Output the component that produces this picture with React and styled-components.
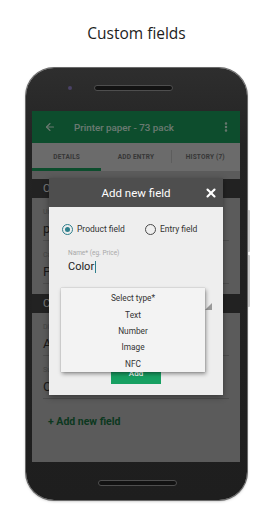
import React from 'react';
import styled, { createGlobalStyle } from 'styled-components';
import { ArrowLeft, EllipsisVertical, X } from 'lucide-react';

const GlobalStyle = createGlobalStyle`
  html, body {
    margin: 0;
    padding: 0;
    background: #ffffff;
  }
  * {
    box-sizing: border-box;
  }
`;

const Page = styled.div`
  width: 273px;
  height: 512px;
  overflow: hidden;
  font-family: Roboto, "Liberation Sans", sans-serif;
`;

const Heading = styled.h1`
  margin: 0;
  padding-top: 22px;
  font-family: "Open Sans", "Liberation Sans", sans-serif;
  font-weight: 400;
  font-size: 15.5px;
  line-height: 22px;
  color: #1c1c1c;
  text-align: center;
`;

const Phone = styled.div`
  position: relative;
  margin: 24px 0 0 26px;
  width: 221px;
  height: 432px;
  border-radius: 28px;
  background: linear-gradient(180deg, #2e2e2e 0%, #232323 18%, #1e1e1e 100%);
  box-shadow: 0 0 0 1px #6a6a6a, 0 1px 3px rgba(0, 0, 0, 0.35);
  display: flex;
  flex-direction: column;
`;

const SideKey = styled.div`
  position: absolute;
  right: -3px;
  top: ${(p) => p.$top}px;
  width: 2px;
  height: ${(p) => p.$h}px;
  background: #c9c9c9;
  border-radius: 0 1px 1px 0;
`;

const TopBezel = styled.div`
  height: 43px;
  display: flex;
  align-items: flex-start;
  padding: 17px 0 0 42px;
  gap: 22px;
`;

const Camera = styled.div`
  width: 4px;
  height: 4px;
  margin-top: 1px;
  border-radius: 50%;
  background: #4a4266;
`;

const Speaker = styled.div`
  width: 79px;
  height: 6px;
  border-radius: 3px;
  background: #121212;
  border: 1px solid #4e4e4e;
`;

const Screen = styled.div`
  position: relative;
  margin: 0 7px 0 6px;
  height: 351px;
  overflow: hidden;
  background: #b6b6b6;
`;

const AppBar = styled.div`
  height: 32px;
  background: #1a9a5a;
  display: flex;
  align-items: center;
  padding: 0 8px 0 12px;
  color: #d6f2e2;
`;

const AppTitle = styled.div`
  flex: 1;
  margin-left: 18px;
  font-size: 9.8px;
  font-weight: 500;
`;

const Tabs = styled.div`
  height: 28px;
  background: #d6d6d6;
  display: flex;
`;

const Tab = styled.div`
  position: relative;
  flex: 1;
  display: flex;
  align-items: center;
  justify-content: center;
  font-size: 6.5px;
  font-weight: 700;
  letter-spacing: 0.2px;
  color: #6e6e6e;
  border-bottom: 3px solid ${(p) => (p.$active ? '#1a9a5a' : 'transparent')};
  padding-top: 3px;

  & + &::before {
    content: '';
    position: absolute;
    left: 0;
    top: 7px;
    height: 13px;
    width: 1px;
    background: #bbbbbb;
  }
`;

const Content = styled.div`
  padding-top: 8px;
  display: flex;
  flex-direction: column;
`;

const SectionHeader = styled.div`
  height: 19px;
  margin-top: ${(p) => p.$gap || 0}px;
  background: #444;
  color: #eeeeee;
  font-size: 11px;
  line-height: 19px;
  padding-left: 11px;
`;

const Field = styled.div`
  height: 43px;
  margin: 0 11px;
  padding-top: 10px;
  border-bottom: 1px solid #9a9a9a;
`;

const FieldLabel = styled.div`
  font-size: 7px;
  line-height: 9px;
  color: #888;
`;

const FieldValue = styled.div`
  margin-top: 3px;
  font-size: 13px;
  line-height: 17px;
  color: #333;
`;

const AddLink = styled.div`
  margin: 16px 0 0 16px;
  font-size: 10.5px;
  font-weight: 700;
  line-height: 14px;
  color: #16703f;
`;

const Scrim = styled.div`
  position: absolute;
  inset: 0;
  background: rgba(0, 0, 0, 0.5);
`;

const Dialog = styled.div`
  position: absolute;
  left: 17px;
  top: 67px;
  width: 174px;
  box-shadow: 0 2px 6px rgba(0, 0, 0, 0.4);
`;

const DialogHeader = styled.div`
  height: 29px;
  background: #4e4e4e;
  display: grid;
  grid-template-columns: 1fr auto 1fr;
  align-items: center;
  color: #ffffff;
`;

const DialogTitle = styled.div`
  grid-column: 2;
  font-size: 11.5px;
  line-height: 16px;
`;

const Close = styled.div`
  justify-self: end;
  margin-right: 5px;
  display: flex;
`;

const DialogBody = styled.div`
  position: relative;
  background: #eeeeee;
  padding: 17px 0 11px;
  display: flex;
  flex-direction: column;
`;

const RadioRow = styled.div`
  display: flex;
  gap: 20px;
  padding-left: 13px;
`;

const RadioOption = styled.label`
  display: flex;
  align-items: center;
  gap: 4px;
  font-size: 8.5px;
  line-height: 11px;
  color: #333;
`;

const RadioDot = styled.span`
  width: 11px;
  height: 11px;
  border-radius: 50%;
  border: 1.3px solid ${(p) => (p.$checked ? '#2e7f8c' : '#4a4a4a')};
  display: flex;
  align-items: center;
  justify-content: center;

  &::after {
    content: '';
    width: 5px;
    height: 5px;
    border-radius: 50%;
    background: ${(p) => (p.$checked ? '#2e7f8c' : 'transparent')};
  }
`;

const NameField = styled.div`
  margin-top: 14px;
  padding-left: 19px;
`;

const NameLabel = styled.div`
  font-size: 6.5px;
  line-height: 9px;
  color: #a8a8a8;
`;

const NameValue = styled.div`
  margin-top: 2px;
  font-size: 11px;
  line-height: 14px;
  color: #222;
  display: flex;
  align-items: center;
`;

const Caret = styled.span`
  width: 1px;
  height: 12px;
  margin-left: 1px;
  background: #2e7f8c;
`;

const SpinnerRow = styled.div`
  height: 22px;
  margin-top: 14px;
  padding-right: 11px;
  display: flex;
  justify-content: flex-end;
  align-items: flex-end;
`;

const SpinnerArrow = styled.span`
  width: 0;
  height: 0;
  border-left: 7px solid transparent;
  border-bottom: 7px solid #9a9a9a;
`;

const AddButton = styled.div`
  align-self: center;
  margin-top: 52px;
  width: 50px;
  height: 22px;
  background: #17a062;
  color: #ffffff;
  font-size: 8px;
  font-weight: 500;
  display: flex;
  align-items: center;
  justify-content: center;
`;

const TypeMenu = styled.div`
  position: absolute;
  left: 12px;
  top: 81px;
  width: 144px;
  padding-top: 2px;
  background: #f3f3f3;
  box-shadow: 1px 2px 4px rgba(0, 0, 0, 0.4), 0 0 1px rgba(0, 0, 0, 0.3);
`;

const TypeItem = styled.div`
  height: 16.4px;
  display: flex;
  align-items: center;
  justify-content: center;
  font-size: 8.3px;
  color: #333;
`;

const BottomBezel = styled.div`
  height: 38px;
  display: flex;
  justify-content: center;
  padding: 18px 0 0 1px;
`;

const tabs = ['DETAILS', 'ADD ENTRY', 'HISTORY (7)'];
const types = ['Select type*', 'Text', 'Number', 'Image', 'NFC'];

export default function App() {
  return (
    <Page>
      <GlobalStyle />
      <Heading>Custom fields</Heading>
      <Phone>
        <SideKey $top={142} $h={42} />
        <SideKey $top={187} $h={52} />
        <TopBezel>
          <Camera />
          <Speaker />
        </TopBezel>
        <Screen>
          <AppBar>
            <ArrowLeft size={12} strokeWidth={2.2} />
            <AppTitle>Printer paper - 73 pack</AppTitle>
            <EllipsisVertical size={12} strokeWidth={3} />
          </AppBar>
          <Tabs>
            {tabs.map((t, i) => (
              <Tab key={t} $active={i === 0}>{t}</Tab>
            ))}
          </Tabs>
          <Content>
            <SectionHeader>Overview</SectionHeader>
            <Field>
              <FieldLabel>Unit</FieldLabel>
              <FieldValue>pcs</FieldValue>
            </Field>
            <Field>
              <FieldLabel>Category</FieldLabel>
              <FieldValue>Paper</FieldValue>
            </Field>
            <SectionHeader $gap={10}>Custom fields</SectionHeader>
            <Field>
              <FieldLabel>Dimensions</FieldLabel>
              <FieldValue>A4</FieldValue>
            </Field>
            <Field>
              <FieldLabel>Supplier</FieldLabel>
              <FieldValue>Office Depot</FieldValue>
            </Field>
            <AddLink>+ Add new field</AddLink>
          </Content>
          <Scrim />
          <Dialog>
            <DialogHeader>
              <DialogTitle>Add new field</DialogTitle>
              <Close>
                <X size={14} strokeWidth={3.6} />
              </Close>
            </DialogHeader>
            <DialogBody>
              <RadioRow>
                <RadioOption>
                  <RadioDot $checked />
                  Product field
                </RadioOption>
                <RadioOption>
                  <RadioDot />
                  Entry field
                </RadioOption>
              </RadioRow>
              <NameField>
                <NameLabel>Name* (eg. Price)</NameLabel>
                <NameValue>
                  Color
                  <Caret />
                </NameValue>
              </NameField>
              <SpinnerRow>
                <SpinnerArrow />
              </SpinnerRow>
              <AddButton>Add</AddButton>
              <TypeMenu>
                {types.map((t) => (
                  <TypeItem key={t}>{t}</TypeItem>
                ))}
              </TypeMenu>
            </DialogBody>
          </Dialog>
        </Screen>
        <BottomBezel>
          <Speaker />
        </BottomBezel>
      </Phone>
    </Page>
  );
}
